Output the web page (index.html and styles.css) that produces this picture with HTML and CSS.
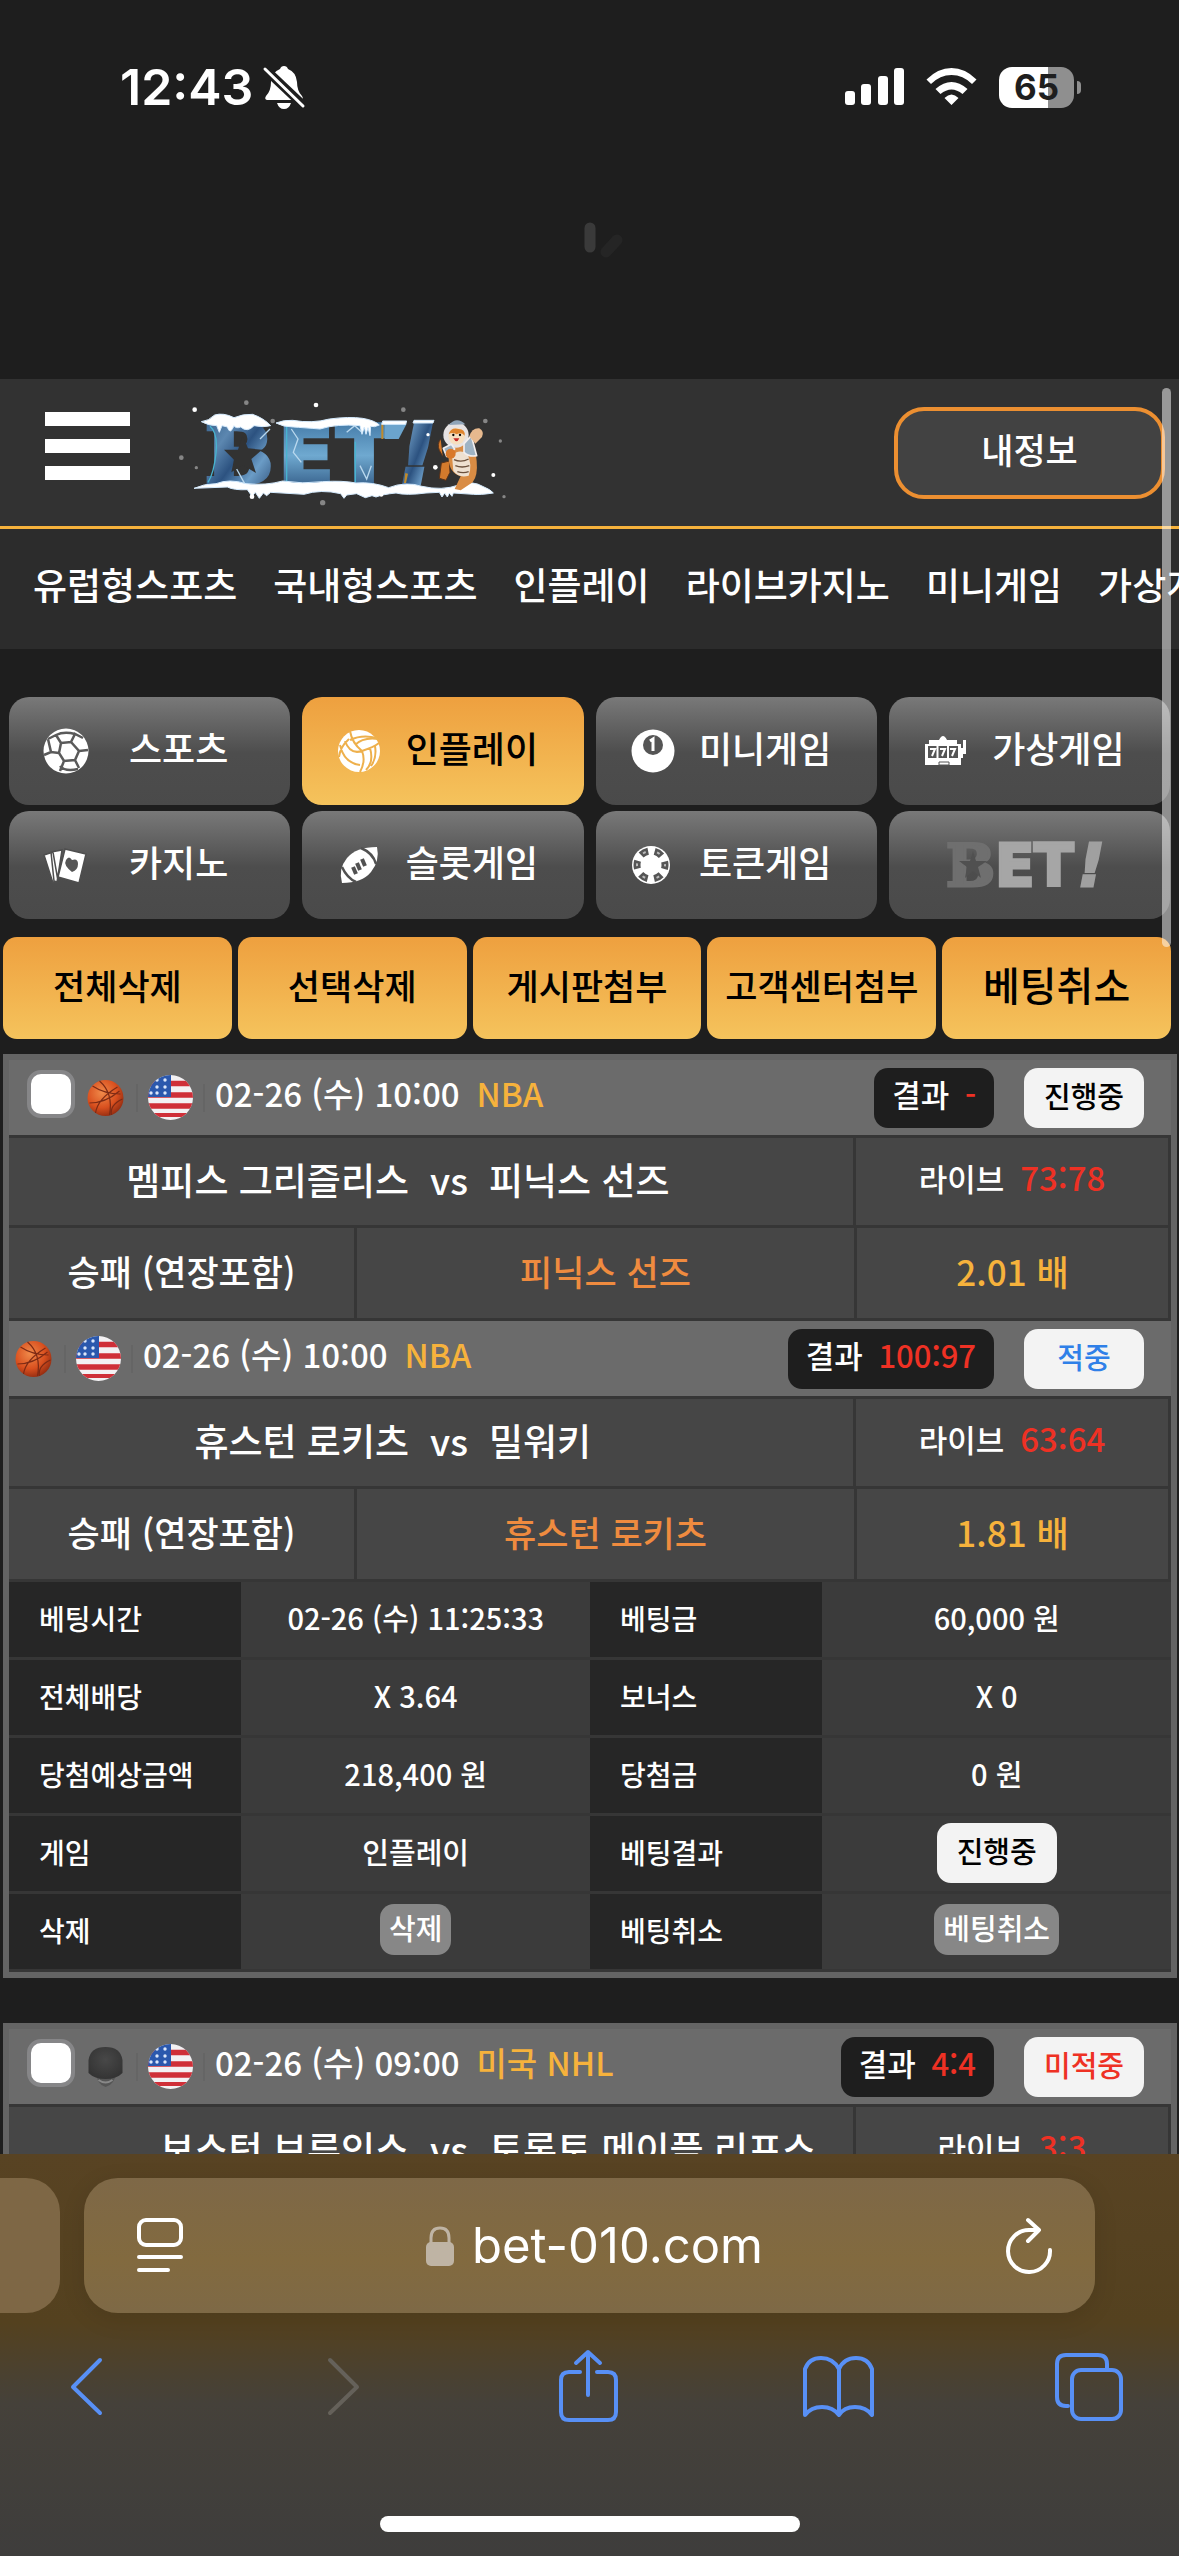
FILE: index.html
```html
<!DOCTYPE html>
<html lang="ko">
<head>
<meta charset="utf-8">
<meta name="viewport" content="width=device-width">
<title>BET! 베팅내역</title>
<link rel="stylesheet" href="styles.css">
</head>
<body>
<svg class="defs" width="0" height="0" aria-hidden="true">
  <defs>
    <linearGradient id="ice" x1="0" y1="0" x2="1" y2="1">
      <stop offset="0" stop-color="#2d5884"/><stop offset=".3" stop-color="#5c87b0"/>
      <stop offset=".5" stop-color="#2c5280"/><stop offset=".7" stop-color="#6b9cc6"/><stop offset="1" stop-color="#1f3d66"/>
    </linearGradient>
    <linearGradient id="frost" x1="0" y1="0" x2="0" y2="1">
      <stop offset="0" stop-color="#356a9a"/><stop offset=".5" stop-color="#6fa9d0"/><stop offset="1" stop-color="#1d3f6b"/>
    </linearGradient>
    <radialGradient id="orange-ball" cx=".4" cy=".35" r=".7">
      <stop offset="0" stop-color="#f08a4a"/><stop offset=".6" stop-color="#d9501f"/><stop offset="1" stop-color="#8f2a10"/>
    </radialGradient>
    <radialGradient id="puck-fill" cx=".5" cy=".4" r=".6">
      <stop offset="0" stop-color="#484848"/><stop offset="1" stop-color="#343434"/>
    </radialGradient>
    <clipPath id="flag-clip"><circle cx="22.5" cy="22.5" r="22.5"/></clipPath>
  </defs>
  <symbol id="basketball" viewBox="0 0 36 38">
    <circle cx="18" cy="19" r="18" fill="url(#orange-ball)"/>
    <path d="M5 7q12 8 28 8M12 2q14 12 10 34M2 24q16 0 30-12M8 34q2-14 22-26M24 36q-2-10 11-16" fill="none" stroke="#7d2a14" stroke-width="1.2"/>
  </symbol>
  <symbol id="puck" viewBox="0 0 36 42">
    <path d="M8 26q2 13 10 15q9-2 11-15z" fill="#555"/><path d="M11 34q7 5 14 0" fill="none" stroke="#888" stroke-width="2"/>
    <path d="M1 14Q3 1 18 1T35 14v13q-6 6-17 6T1 27z" fill="url(#puck-fill)"/>
  </symbol>
  <symbol id="flag-us" viewBox="0 0 45 45">
    <g clip-path="url(#flag-clip)">
      <path fill="#f3f1f3" d="M0 0h45v45H0z"/>
      <path stroke="#cf2f38" stroke-width="5.6" d="M0 8.500h45M0 20h45M0 31h45M0 42h0"/>
      <path stroke="#cf2f38" stroke-width="4" d="M0 40h45"/>
      <path fill="#2b58ad" d="M0 0h23v22H0z"/>
      <g fill="#dbe6fa"><circle cx="9" cy="5" r="1.700"/><circle cx="17" cy="5" r="1.700"/><circle cx="9" cy="12" r="1.700"/><circle cx="17" cy="12" r="1.700"/><circle cx="3" cy="18" r="1.700"/><circle cx="9" cy="18" r="1.700"/><circle cx="17" cy="18" r="1.700"/></g>
    </g>
  </symbol>
</svg>

<div class="status-bar">
  <div class="status-left">
    <span class="time">12:43</span>
    <svg width="42" height="44" viewBox="0 0 42 44" aria-label="무음">
      <path fill="#fff" d="M21 1q3 0 4 3q8 3 9 13q0 9 5 14q2 3-1 4H4q-3-1-1-4q5-5 5-14Q9 7 17 4q1-3 4-3zM14 38h14q-2 6-7 6t-7-6z"/>
      <path stroke="#1e1e1e" stroke-width="9" d="M3 5l37 35"/>
      <path stroke="#fff" stroke-width="3" stroke-linecap="round" d="M2 4l38 37"/>
    </svg>
  </div>
  <div class="status-right">
    <svg width="59" height="38" viewBox="0 0 59 38" fill="#fff" aria-label="신호"><rect y="23" width="10" height="14" rx="3"/><rect x="16" y="16" width="10" height="21" rx="3"/><rect x="33" y="8" width="10" height="29" rx="3"/><rect x="49" width="10" height="37" rx="3"/></svg>
    <svg width="51" height="38" viewBox="0 0 51 38" aria-label="와이파이"><path fill="#fff" d="M25.500 37l-7-7q7-7 14 0zM14.500 26l-5-5q16-14 32 0l-5 5q-11-9-22 0zM5 16l-4.500-4.500Q12 0 25.500 0t25 11.500L46 16Q37 7 25.500 7T5 16z"/></svg>
    <div class="battery"><span>65</span></div>
  </div>
</div>

<div class="refresh">
  <svg width="72" height="44" viewBox="0 0 72 44" stroke-width="11" stroke-linecap="round"><path stroke="#3a3a3a" d="M36 6v19"/><path stroke="#252525" d="M52 30l11-12"/></svg>
</div>

<main class="page">
  <div class="scroll-thumb"></div>
  <header class="site-header">
    <button class="hamburger" aria-label="메뉴"><i></i><i></i><i></i></button>
    <a class="logo" href="#">
      <svg width="328" height="104" viewBox="60 36 984 312" aria-label="BET!">
        <g class="logo-letters" stroke-width="14">
          <text class="letter-b" x="136" y="282" fill="url(#ice)" stroke="url(#ice)">B</text>
          <text x="356" y="282" fill="url(#frost)" stroke="url(#frost)">E</text>
          <text x="530" y="282" fill="url(#frost)" stroke="url(#frost)">T</text>
          <text class="letter-mark" x="718" y="282" fill="url(#ice)" stroke="url(#ice)">!</text>
        </g>
        <path fill="none" stroke="#48b4cf" stroke-width="4" d="M380 108v170M586 158v122M150 112q24 20 18 80t-24 88"/>
        <path fill="none" stroke="#b9d8ee" stroke-width="4" d="M394 120l20 30-14 40 24 30M560 130l24-20 20 18M230 240l24 44M300 150l30-30M600 230l20 40 14-40"/>
        <path fill="#6ba4cd" d="M674 104h66l-24 46h-42z"/><path fill="#c08b2c" d="M664 104h6v46h-6zM736 252l8 2-6 28h-6z"/>
        <path fill="#323232" d="M248 140l16 38 42 4-32 28 14 42-40-24-34 22 8-38-30-30h42z"/>
        <g stroke="#d4eafd" stroke-width="3" fill="#fff">
          <path d="M124 98q22-2 40-20q26-8 58 8q28-12 56-10q34 12 54 34q-20 6-50 0q-20 22-40 4q-14 6-20-4q-12 30-20 4l-16-4-8 20-8-20q-24 0-46-12z"/>
          <path d="M348 102q24-10 50-8q60 10 110-4q60-8 100-2q36 6 50 20q-16 8-26 4l-2 28-6-24-6 20-5-22-7 22-6-26q-70-6-120 10q-50-4-80-6q-30 0-52-12z"/>
          <path d="M102 298q30-14 66-14q40-16 90 0q60 6 110-8q60 10 120 2q60-4 100 4q50-4 98 14q50-20 100-4q60 14 110-4q40-16 76 6q20 8 28 18q-40 6-60 4l-60-4-4 10-8-10-6 12-8-12-8 12-8-14-40 2q-60 8-90 0q-40 4-60 12l-12-4-20 6-26-12-30 4-8 10-10-14q-60-14-110 2l-100-6-12 10-10-8-12 16-12-18-10 12-14-20q-40 2-60-8z"/>
          <path d="M668 96h72l-3 10h-72zM762 94h60l-3 8h-60z"/>
        </g>
        <g stroke-linejoin="round">
          <path fill="#d47a2c" stroke="#5a3219" stroke-width="3" d="M842 150q-12 16-4 34l10 18M868 216l-24 6-6 46 20 6 12-24z"/>
          <path fill="#d98c44" d="M866 210q-4-54 40-54q40 0 44 60q4 44-12 64l-36 24-18-4 18-38q-34-10-36-52z"/>
          <path fill="#eee0d0" d="M876 200q20-22 46-6q16 34 4 66q-30 8-46-14z"/>
          <path stroke="#6b503c" stroke-width="4" fill="none" d="M882 212q22 10 44-2M886 230q20 8 42 0M892 248q18 6 34 0"/>
          <circle cx="888" cy="138" r="38" fill="#e6e2e2"/><path d="M866 108q24-28 50-2z" fill="#8fa4b8"/>
          <circle cx="890" cy="142" r="25" fill="#f6dfbf"/><path d="M866 136q6-22 30-16q20 0 18 20q-10-12-24-4q-14-8-24 0z" fill="#df852e"/><circle cx="880" cy="138" r="3.500"/><circle cx="900" cy="138" r="3.500"/><path d="M880 148h18q-8 18-18 0z" fill="#c52727"/>
          <path fill="#9eb3c4" stroke="#f2eeee" stroke-width="5" d="M912 164l22-24 16 60q-24 4-38-10z"/>
          <path fill="#e7b98e" d="M928 142q8-26 30-24q16 10 8 26l-20 20z"/>
          <path fill="#9eb3c4" stroke="#f2eeee" stroke-width="5" d="M850 178l24-12 10 14-24 22z"/><circle cx="872" cy="194" r="15" fill="#d9792b"/>
        </g>
        <g fill="#fff"><circle cx="104" cy="62" r="7"/><circle cx="468" cy="48" r="7"/><circle cx="826" cy="235" r="7"/><circle cx="1000" cy="258" r="6"/><circle cx="276" cy="323" r="7"/><circle cx="664" cy="317" r="6"/><circle cx="804" cy="137" r="5"/></g>
        <g fill="#868686"><circle cx="259" cy="41" r="7"/><circle cx="338" cy="96" r="7"/><circle cx="730" cy="62" r="7"/><circle cx="976" cy="96" r="7"/><circle cx="64" cy="206" r="7"/><circle cx="109" cy="236" r="5"/><circle cx="1021" cy="156" r="5"/><circle cx="1032" cy="323" r="5"/><circle cx="488" cy="341" r="8"/></g>
      </svg>
    </a>
    <button class="my-info">내정보</button>
  </header>
  <nav class="site-nav">
    <a href="#">유럽형스포츠</a><a href="#">국내형스포츠</a><a href="#">인플레이</a><a href="#">라이브카지노</a><a href="#">미니게임</a><a href="#">가상게임</a>
  </nav>

  <div class="game-menu">
    <button class="game">
      <svg width="46" height="48" viewBox="0 0 46 48"><circle cx="23" cy="24" r="22.500" fill="#fff"/><path fill="none" stroke="#5a5a5a" stroke-width="2.500" d="M18 16l10-1 8 9-4 9-11 1-5-8zM28 15l4-8 8 4M36 24l9-1M32 33l4 8M21 34l-4 10M16 26L8 25 1 28M18 16l-5-8M13 8L5 12M13 8q8-4 19-1M8 25L5 12M17 39q5 6 18 3"/></svg>
      <span>스포츠</span></button>
    <button class="game active">
      <svg width="46" height="48" viewBox="0 0 46 48"><circle cx="23" cy="24" r="21" fill="#fff"/><path fill="none" stroke="#eeb04c" stroke-width="2" d="M14 4q2 12 12 20M26 24Q38 20 43 16M14 13q12-6 27-2M19 18q8-8 23-6M26 24q4 10-2 21M13 12Q4 20 3 30M26 24Q14 28 9 14M24 38Q8 36 4 18M34 21q4 14-4 22M39 19q2 12-4 20"/></svg>
      <span>인플레이</span></button>
    <button class="game">
      <svg width="46" height="48" viewBox="0 0 46 48"><circle cx="23" cy="24" r="21.500" fill="#fff"/><circle cx="23" cy="18" r="10" fill="#555"/><path fill="none" stroke="#fff" stroke-width="3" d="M20 14l3-2v12"/></svg>
      <span>미니게임</span></button>
    <button class="game">
      <svg width="46" height="48" viewBox="0 0 46 48"><path fill="#fff" d="M2 17h4v-4h10q4-8 8 0h10v4h4v4h2v-8h3v14h-3v4h-2v7H2z"/><path fill="#555" d="M5 19h30v12H5z"/><path fill="none" stroke="#fff" stroke-width="2" d="M7 22h5l-3 7M17 22h5l-3 7M27 22h5l-3 7M14.500 19v12M25 19v12"/><path fill="#fff" stroke="#555" d="M16 35h10v3H16z"/></svg>
      <span>가상게임</span></button>
    <button class="game">
      <svg width="46" height="48" viewBox="0 0 46 48"><path fill="#fff" stroke="#4e4e4e" stroke-width="1.500" d="M1 14l9-3 5 29-5 2zM8 11l11-2-5 32-3-1zM22 8l21 5-7 29-21-6z"/><path fill="#555" d="M29 31q-9-7-6-12t6 0q6-2 6 4t-6 8z"/></svg>
      <span>카지노</span></button>
    <button class="game">
      <svg width="46" height="48" viewBox="0 0 46 48"><path fill="#fff" d="M41 6q3 14-6 25T6 42Q2 28 11 17T41 6z"/><path stroke="#515151" stroke-width="2.500" fill="none" d="M25 7q12 5 15 16M6 26q5 11 14 15"/><path stroke="#515151" stroke-width="4" d="M26 18l3 7M21 22l3 7M17 26l3 7"/></svg>
      <span>슬롯게임</span></button>
    <button class="game">
      <svg width="46" height="48" viewBox="0 0 46 48"><circle cx="21" cy="24" r="19" fill="#fff"/><circle cx="21" cy="24" r="14" fill="none" stroke="#555" stroke-width="7" stroke-dasharray="8 6.660" stroke-dashoffset="4"/><circle cx="21" cy="24" r="14" fill="none" stroke="#bbb" stroke-width="2" stroke-dasharray="3 11.660" stroke-dashoffset="1.500"/></svg>
      <span>토큰게임</span></button>
    <button class="game brand" aria-label="BET!">
      <svg width="166" height="60" viewBox="0 0 166 60"><g class="brand-letters" stroke-width="3"><text class="letter-b" x="0" y="51" fill="#6f6f6f" stroke="#6f6f6f">B</text><text x="49" y="51" fill="#a6a6a6" stroke="#a6a6a6">E</text><text x="88" y="51" fill="#a6a6a6" stroke="#a6a6a6">T</text><text class="letter-mark" x="132" y="51" fill="#a0a0a0" stroke="#a0a0a0">!</text></g><path fill="#505050" d="M27 16l3 10h11l-9 6 3 11-8-7-8 7 2-11-8-6h11z"/></svg></button>
  </div>

  <div class="actions">
    <button>전체삭제</button><button>선택삭제</button><button>게시판첨부</button><button>고객센터첨부</button><button class="large">베팅취소</button>
  </div>

  <section class="slip">
    <div class="match-head">
      <input type="checkbox" aria-label="베팅 선택">
      <svg class="sport" width="41" height="38"><use href="#basketball"/></svg><i class="sep"></i>
      <svg width="45" height="45"><use href="#flag-us"/></svg><i class="sep"></i>
      <span class="date">02-26 (수) 10:00</span><span class="league">NBA</span>
      <span class="score">결과 <b>-</b></span><span class="state">진행중</span>
    </div>
    <div class="match-row">
      <div class="teams"><span>멤피스 그리즐리스</span><span>vs</span><span>피닉스 선즈</span></div>
      <div class="live">라이브 <b>73:78</b></div>
    </div>
    <div class="pick-row"><div>승패 (연장포함)</div><div class="pick">피닉스 선즈</div><div class="odds">2.01 배</div></div>

    <div class="match-head compact">
      <svg class="sport" width="41" height="38"><use href="#basketball"/></svg><i class="sep"></i>
      <svg width="45" height="45"><use href="#flag-us"/></svg><i class="sep"></i>
      <span class="date">02-26 (수) 10:00</span><span class="league">NBA</span>
      <span class="score">결과 <b>100:97</b></span><span class="state won">적중</span>
    </div>
    <div class="match-row">
      <div class="teams"><span>휴스턴 로키츠</span><span>vs</span><span>밀워키</span></div>
      <div class="live">라이브 <b>63:64</b></div>
    </div>
    <div class="pick-row"><div>승패 (연장포함)</div><div class="pick">휴스턴 로키츠</div><div class="odds">1.81 배</div></div>

    <table class="summary">
      <tr><th scope="row">베팅시간</th><td>02-26 (수) 11:25:33</td><th scope="row">베팅금</th><td>60,000 원</td></tr>
      <tr><th scope="row">전체배당</th><td>X 3.64</td><th scope="row">보너스</th><td>X 0</td></tr>
      <tr><th scope="row">당첨예상금액</th><td>218,400 원</td><th scope="row">당첨금</th><td>0 원</td></tr>
      <tr><th scope="row">게임</th><td>인플레이</td><th scope="row">베팅결과</th><td><span class="state">진행중</span></td></tr>
      <tr><th scope="row">삭제</th><td><button>삭제</button></td><th scope="row">베팅취소</th><td><button>베팅취소</button></td></tr>
    </table>
  </section>

  <section class="slip">
    <div class="match-head">
      <input type="checkbox" aria-label="베팅 선택">
      <svg class="sport" width="41" height="42"><use href="#puck"/></svg><i class="sep"></i>
      <svg width="45" height="45"><use href="#flag-us"/></svg><i class="sep"></i>
      <span class="date">02-26 (수) 09:00</span><span class="league">미국 NHL</span>
      <span class="score">결과 <b>4:4</b></span><span class="state lost">미적중</span>
    </div>
    <div class="match-row">
      <div class="teams"><span>보스턴 브루인스</span><span>vs</span><span>토론토 메이플 리프스</span></div>
      <div class="live">라이브 <b>3:3</b></div>
    </div>
  </section>
</main>

<footer class="browser-bar">
  <div class="tabs">
    <div class="prev-tab"></div>
    <div class="address">
      <button aria-label="페이지 메뉴"><svg width="46" height="56" viewBox="0 0 46 56" fill="none" stroke="#fff" stroke-width="4" stroke-linecap="round"><rect x="2" y="2" width="42" height="25" rx="7"/><path d="M2 39h42M2 52h29"/></svg></button>
      <button class="url"><svg width="28" height="40" viewBox="0 0 28 40"><rect y="16" width="28" height="24" rx="5" fill="#bfb4a4"/><path d="M5 18v-6q0-10 9-10t9 10v6" fill="none" stroke="#bfb4a4" stroke-width="3"/></svg>bet-010.com</button>
      <button aria-label="새로고침"><svg width="46" height="56" viewBox="0 0 46 56" fill="none" stroke="#fff" stroke-width="4" stroke-linecap="round" stroke-linejoin="round"><path d="M44 32A21 21 0 1 1 23 12h10M22 2l11 10-11 11"/></svg></button>
    </div>
  </div>
  <div class="tools">
    <button aria-label="뒤로"><svg width="73" height="74" viewBox="0 0 73 74"><path d="M50 11L23 38l27 26"/></svg></button>
    <button class="off" aria-label="앞으로"><svg width="73" height="74" viewBox="0 0 73 74"><path d="M29 11l27 27-27 26"/></svg></button>
    <button aria-label="공유"><svg width="73" height="74" viewBox="0 0 73 74"><path d="M29 23H18q-8 0-8 8v32q0 8 8 8h39q8 0 8-8V31q0-8-8-8H46M37 46V3M25 14L37 3l12 11"/></svg></button>
    <button aria-label="책갈피"><svg width="73" height="74" viewBox="0 0 73 74"><path d="M37 20Q31 9 19 9T3 20v46q6-8 17-8t17 8q5-8 16-8t17 8V20Q66 9 54 9T37 20v46"/></svg></button>
    <button aria-label="탭"><svg width="73" height="74" viewBox="0 0 73 74"><path d="M16 57h-2q-9 0-9-9V15q0-9 9-9h32q9 0 9 9v4"/><rect x="20" y="21" width="49" height="49" rx="9"/></svg></button>
  </div>
  <div class="home-bar"></div>
</footer>
</body>
</html>
```
FILE: styles.css
```css
* { box-sizing: border-box; }
body {
  margin: 0;
  height: 100vh;
  display: flex;
  flex-direction: column;
  overflow: hidden;
  background: #1e1e1e;
  color: #fff;
  font-family: "Noto Sans CJK KR", sans-serif;
  font-size: 31px;
  font-weight: 500;
  line-height: 1;
}
button { margin: 0; padding: 0; border: 0; background: none; color: inherit; font: inherit; white-space: nowrap; }
a { color: inherit; text-decoration: none; }
b { font-weight: inherit; }
svg { display: block; flex: none; overflow: visible; }
.defs { position: absolute; }

/* phone status bar */
.status-bar { display: flex; flex: none; justify-content: space-between; align-items: center; height: 174px; padding: 0 105px 0 120px; font-family: Inter, sans-serif; }
.status-left { display: flex; align-items: center; gap: 10px; }
.status-right { display: flex; align-items: center; gap: 22px; }
.time { font-size: 50px; font-weight: 600; }
.battery { position: relative; width: 75px; height: 41px; border-radius: 13px; background: linear-gradient(90deg, #fff 65%, #8f8f8f 65%); color: #1e1e1e; font-size: 35px; font-weight: 700; line-height: 41px; text-align: center; }
.battery::after { content: ""; position: absolute; right: -7px; top: 14px; width: 4px; height: 13px; border-radius: 0 4px 4px 0; background: #8f8f8f; }
.refresh { display: flex; flex: none; justify-content: center; height: 205px; padding-top: 48px; }

/* site header */
.page { position: relative; flex: 1; min-height: 0; overflow: hidden; }
.scroll-thumb { position: absolute; z-index: 2; top: 9px; right: 8px; width: 9px; height: 559px; border-radius: 5px; background: rgba(255, 255, 255, .5); }
.site-header { display: flex; align-items: center; height: 150px; padding: 0 14px 0 45px; background: #323232; border-bottom: 3px solid #f6b23c; }
.hamburger { display: flex; flex-direction: column; gap: 13px; width: 85px; padding-bottom: 14px; margin-right: 50px; }
.hamburger i { height: 14px; width: 100%; background: #fff; }
.logo-letters, .brand-letters { font-family: "DejaVu Sans", sans-serif; font-weight: 700; }
.logo-letters { font-size: 240px; }
.brand-letters { font-size: 58px; }
.letter-b { font-family: "DejaVu Serif", serif; }
.letter-mark { font-style: italic; }
.my-info { margin-left: auto; width: 271px; height: 92px; padding-bottom: 8px; border: 4px solid #ec8f31; border-radius: 30px; background: #424242; font-size: 35px; }
.site-nav { display: flex; align-items: center; gap: 36px; height: 120px; padding: 0 0 10px 33px; background: #2c2c2c; font-size: 37px; white-space: nowrap; overflow: hidden; }

/* game menu */
.game-menu { display: grid; grid-template-columns: repeat(4, 1fr); gap: 6px 12px; padding: 48px 9px 0 9px; }
.game { display: flex; align-items: center; height: 108px; padding: 0 22px 0 34px; border-radius: 20px; background: linear-gradient(#797979, #4d4d4d 52%, #4a4a4a); font-size: 36px; }
.game span { flex: 1; padding-bottom: 8px; text-align: center; }
.game.active { background: linear-gradient(#eea03f, #f5c35c); color: #000; }
.game.brand { justify-content: center; padding: 0; }

.actions { display: grid; grid-template-columns: repeat(5, 1fr); gap: 6px; padding: 18px 8px 15px 3px; }
.actions button { height: 102px; padding-bottom: 8px; border-radius: 14px; background: linear-gradient(#eea03f, #f5c35c); color: #000; font-size: 35px; }
.actions .large { font-size: 40px; }

/* bet slips */
.slip { margin: 0 2px 45px 3px; border: 6px solid #646464; }
.match-head { display: flex; align-items: center; gap: 10px; height: 78px; padding: 0 27px 0 18px; background: #6b6b6b; border-bottom: 3px solid #363636; }
.match-head.compact { padding-left: 4px; }
.match-head input { appearance: none; flex: none; width: 48px; height: 48px; margin: 0 0 8px; border: 4px solid #868688; border-radius: 14px; background: #fff; }
.sep { width: 2px; height: 28px; background: #656565; }
.date, .league { padding-bottom: 8px; font-size: 33px; white-space: nowrap; }
.league { margin-left: 7px; }
.league, .odds { color: #f6b23c; }
.score { height: 60px; margin-left: auto; padding: 0 18px; border-radius: 14px; background: #1e1e1e; line-height: 52px; white-space: nowrap; }
.score b { margin-left: 7px; }
.score b, .live b { color: #ee3124; }
.state { display: inline-block; width: 120px; height: 60px; border-radius: 14px; background: #f3f3f3; color: #000; font-size: 29px; line-height: 55px; text-align: center; }
.match-head .state { margin-left: 20px; }
.state.won { color: #2f80e8; }
.state.lost { color: #ee3124; }

.match-row, .pick-row { display: grid; border-right: 3px solid #363636; background: #464646; }
.match-row { grid-template-columns: 844fr 315fr; height: 90px; }
.pick-row { grid-template-columns: 345fr 500fr 314fr; height: 93px; font-size: 35px; }
.match-row > div, .pick-row > div { display: flex; align-items: center; justify-content: center; padding-bottom: 5px; border-bottom: 3px solid #363636; white-space: nowrap; }
.match-row > div + div, .pick-row > div + div { border-left: 3px solid #363636; }
.match-row .teams { display: grid; grid-template-columns: 1fr 40px 1fr; gap: 20px; padding-left: 36px; font-size: 37px; }
.teams span:first-child { justify-self: end; }
.teams span:nth-child(2) { text-align: center; }
.match-row .live { gap: 16px; padding-bottom: 9px; }
.live b { font-size: 33px; }
.pick { color: #ef8b3f; }

.summary { width: 100%; table-layout: fixed; border-collapse: separate; border-spacing: 0; font-size: 29px; }
.summary th, .summary td { height: 78px; padding: 0 0 4px; border-bottom: 3px solid #363636; vertical-align: middle; white-space: nowrap; }
.summary th { width: 20%; padding-left: 30px; background: #262626; font-size: 28px; font-weight: inherit; text-align: left; }
.summary td { background: #3b3b3b; text-align: center; }
.summary td .state { display: block; margin: 3px auto 0; }
.summary button { height: 51px; padding: 0 9px 4px; border-radius: 14px; background: #878787; }

/* browser chrome */
.browser-bar { position: relative; flex: none; padding: 24px 0; background: linear-gradient(#584323, #54411f 42%, #45413a 62%, #3e3d3c); }
.tabs { display: flex; gap: 24px; padding-right: 84px; }
.prev-tab { width: 60px; border-radius: 0 34px 34px 0; background: #7e6745; }
.address { display: flex; flex: 1; align-items: center; justify-content: space-between; height: 135px; padding: 0 43px 0 53px; border-radius: 34px; background: linear-gradient(#7e6847, #826a3f 60%, #7e6946); box-shadow: 0 6px 24px rgba(0, 0, 0, .1); }
.url { display: flex; align-items: center; gap: 18px; font-family: Inter, sans-serif; font-size: 49px; font-weight: 400; }
.tools { display: flex; justify-content: space-between; padding: 36px 54px 93px 50px; }
.tools svg { fill: none; stroke: #5890f6; stroke-width: 4; stroke-linecap: round; stroke-linejoin: round; }
.tools .off svg { stroke: #65615a; }
.home-bar { width: 420px; height: 16px; margin: 0 auto; border-radius: 8px; background: #fff; }
```
